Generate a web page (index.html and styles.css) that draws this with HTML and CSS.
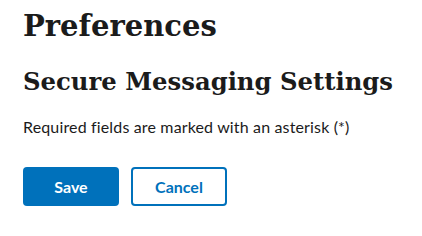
FILE: index.html
```html
<!DOCTYPE html>
<html lang="en">
<head>
  <meta charset="UTF-8" />
  <meta name="viewport" content="width=device-width, initial-scale=1.0"/>
  <title>Preferences</title>
  <link rel="stylesheet" href="styles.css">
</head>
<body>
  <main class="page">
    <h1>Preferences</h1>
    <h2>Secure Messaging Settings</h2>
    <p class="note">Required fields are marked with an asterisk (*)</p>
    <div class="actions">
      <button class="btn btn-primary">Save</button>
      <button class="btn btn-secondary">Cancel</button>
    </div>
  </main>
</body>
</html>
```

FILE: styles.css
```css
* {
  margin: 0;
  padding: 0;
  box-sizing: border-box;
}

body {
  background: #fff;
  color: #1b1b1b;
  font-family: 'Lato', sans-serif;
}

.page {
  padding: 9px 23px 0;
}

h1 {
  font-family: 'DejaVu Serif', serif;
  font-size: 29px;
  font-weight: 700;
  line-height: 1.2;
}

h2 {
  font-family: 'DejaVu Serif', serif;
  font-size: 24.3px;
  font-weight: 700;
  line-height: 1.2;
  margin-top: 23px;
}

.note {
  font-size: 16px;
  letter-spacing: 0.15px;
  line-height: 1.5;
  margin-top: 19px;
}

.actions {
  display: flex;
  gap: 12px;
  margin-top: 28px;
}

.btn {
  height: 39px;
  min-width: 96px;
  padding: 0 20px;
  border-radius: 4px;
  font-family: 'Lato', sans-serif;
  font-size: 16px;
  font-weight: 700;
  cursor: pointer;
}

.btn-primary {
  background: #0071bb;
  color: #fff;
  border: none;
}

.btn-secondary {
  background: #fff;
  color: #0071bb;
  border: 2px solid #0071bb;
}
```
